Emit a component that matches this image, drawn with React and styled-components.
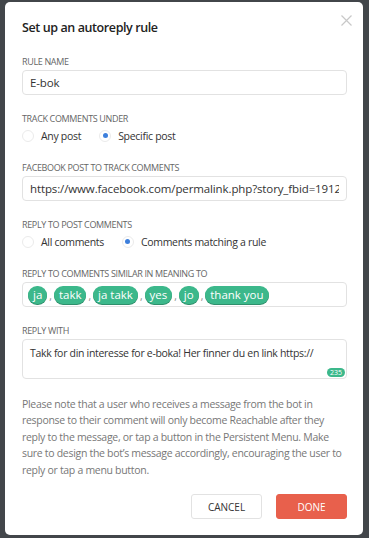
import React, { useState } from "react";
import styled, { createGlobalStyle } from "styled-components";

const GlobalStyle = createGlobalStyle`
  html, body {
    margin: 0;
    padding: 0;
    background: #42464a;
  }
  body {
    font-family: "Open Sans", "Noto Sans", sans-serif;
    color: #333;
  }
  * {
    box-sizing: border-box;
  }
`;

const KEYWORDS = ["ja", "takk", "ja takk", "yes", "jo", "thank you"];

export default function App() {
  const [track, setTrack] = useState("specific");
  const [reply, setReply] = useState("matching");

  return (
    <>
      <GlobalStyle />
      <Overlay>
        <Modal>
          <CloseButton aria-label="Close">
            <svg width="11" height="11" viewBox="0 0 11 11">
              <path d="M0.5 0.5 L10.5 10.5 M10.5 0.5 L0.5 10.5" stroke="#c8c8c8" strokeWidth="1.2" />
            </svg>
          </CloseButton>
          <Title>Set up an autoreply rule</Title>

          <Form>
            <Field>
              <Label>Rule name</Label>
              <Input defaultValue="E-bok" />
            </Field>

            <Field>
              <Label>Track comments under</Label>
              <RadioRow>
                <Radio checked={track === "any"} onClick={() => setTrack("any")}>
                  Any post
                </Radio>
                <Radio checked={track === "specific"} onClick={() => setTrack("specific")}>
                  Specific post
                </Radio>
              </RadioRow>
            </Field>

            <Field>
              <Label>Facebook post to track comments</Label>
              <Input defaultValue="https://www.facebook.com/permalink.php?story_fbid=1912345678901234&id=100001234567890" />
            </Field>

            <Field>
              <Label>Reply to post comments</Label>
              <RadioRow>
                <Radio checked={reply === "all"} onClick={() => setReply("all")}>
                  All comments
                </Radio>
                <Radio checked={reply === "matching"} onClick={() => setReply("matching")}>
                  Comments matching a rule
                </Radio>
              </RadioRow>
            </Field>

            <Field>
              <Label>Reply to comments similar in meaning to</Label>
              <TagBox>
                {KEYWORDS.map((k, i) => (
                  <React.Fragment key={k}>
                    {i > 0 && <Comma>,</Comma>}
                    <Tag>{k}</Tag>
                  </React.Fragment>
                ))}
              </TagBox>
            </Field>

            <Field>
              <Label>Reply with</Label>
              <TextAreaBox>
                <TextArea defaultValue="Takk for din interesse for e-boka! Her finner du en link https://" />
                <Counter>235</Counter>
              </TextAreaBox>
            </Field>

            <Note>
              Please note that a user who receives a message from the bot in
              response to their comment will only become Reachable after they
              reply to the message, or tap a button in the Persistent Menu. Make
              sure to design the bot’s message accordingly, encouraging the user to
              reply or tap a menu button.
            </Note>
          </Form>

          <Actions>
            <Button>Cancel</Button>
            <Button $primary>Done</Button>
          </Actions>
        </Modal>
      </Overlay>
    </>
  );
}

const Radio = ({ checked, onClick, children }) => (
  <RadioOption onClick={onClick}>
    <RadioCircle $checked={checked} />
    {children}
  </RadioOption>
);

const Overlay = styled.div`
  padding: 2px 6px 3px 5px;
`;

const Modal = styled.div`
  position: relative;
  background: #fff;
  border-radius: 5px;
  height: 533px;
  padding: 16px 16px 16px 17px;
  display: flex;
  flex-direction: column;
`;

const CloseButton = styled.button`
  position: absolute;
  top: 13px;
  right: 11px;
  border: none;
  background: none;
  padding: 0;
  cursor: pointer;
  line-height: 0;
`;

const Title = styled.h2`
  margin: 0;
  font-size: 12.5px;
  line-height: 20px;
  font-weight: 600;
  letter-spacing: -0.4px;
  color: #222;
`;

const Form = styled.div`
  margin-top: 17.5px;
  display: flex;
  flex-direction: column;
  gap: 17.5px;
`;

const Field = styled.div`
  display: flex;
  flex-direction: column;
  gap: 2.5px;
`;

const Label = styled.div`
  font-size: 9px;
  line-height: 12px;
  letter-spacing: -0.35px;
  text-transform: uppercase;
  color: #666;
`;

const Input = styled.input`
  width: 100%;
  height: 25px;
  padding: 0 7px;
  border: 1px solid #e2e2e2;
  border-radius: 4px;
  font-family: inherit;
  font-size: 11.5px;
  letter-spacing: -0.12px;
  color: #333;
  outline: none;
`;

const RadioRow = styled.div`
  display: flex;
  gap: 18px;
  height: 17px;
  align-items: center;
`;

const RadioOption = styled.label`
  display: flex;
  align-items: center;
  gap: 7px;
  font-size: 10.5px;
  letter-spacing: -0.3px;
  color: #333;
  cursor: pointer;
`;

const RadioCircle = styled.span`
  width: 12px;
  height: 12px;
  border-radius: 50%;
  border: 1px solid #ebebeb;
  display: flex;
  align-items: center;
  justify-content: center;

  &::after {
    content: "";
    width: 5px;
    height: 5px;
    border-radius: 50%;
    background: ${(p) => (p.$checked ? "#3d7fdc" : "transparent")};
  }
`;

const TagBox = styled.div`
  display: flex;
  align-items: center;
  height: 25px;
  padding: 0 5px;
  border: 1px solid #e2e2e2;
  border-radius: 4px;
`;

const Tag = styled.span`
  background: #3cb88b;
  color: #fff;
  font-size: 11.5px;
  line-height: 18px;
  padding: 0 5px;
  border-radius: 9px;
  box-shadow: 0 1px 0 #2f8f6c;
`;

const Comma = styled.span`
  font-size: 10px;
  color: #888;
  margin: 3px 2px 0;
`;

const TextAreaBox = styled.div`
  position: relative;
  height: 40px;
  border: 1px solid #e2e2e2;
  border-radius: 4px;
`;

const TextArea = styled.textarea`
  width: 100%;
  height: 100%;
  border: none;
  resize: none;
  outline: none;
  background: transparent;
  padding: 6px 7px;
  font-family: inherit;
  font-size: 10.5px;
  letter-spacing: -0.3px;
  line-height: 14px;
  color: #333;
`;

const Counter = styled.span`
  position: absolute;
  right: 1px;
  bottom: 1px;
  background: #3cb88b;
  color: #fff;
  font-size: 7px;
  line-height: 9px;
  padding: 0 3px;
  border-radius: 5px;
`;

const Note = styled.p`
  margin: -1px 0 0;
  font-size: 10.5px;
  line-height: 16.6px;
  letter-spacing: -0.3px;
  color: #777;
`;

const Actions = styled.div`
  margin-top: auto;
  display: flex;
  justify-content: flex-end;
  gap: 14px;
`;

const Button = styled.button`
  width: 71px;
  height: 25px;
  border-radius: 3px;
  font-family: inherit;
  font-size: 10px;
  text-transform: uppercase;
  cursor: pointer;
  border: 1px solid ${(p) => (p.$primary ? "#e8604c" : "#e2e2e2")};
  background: ${(p) => (p.$primary ? "#e8604c" : "#fff")};
  color: ${(p) => (p.$primary ? "#fff" : "#333")};
`;
